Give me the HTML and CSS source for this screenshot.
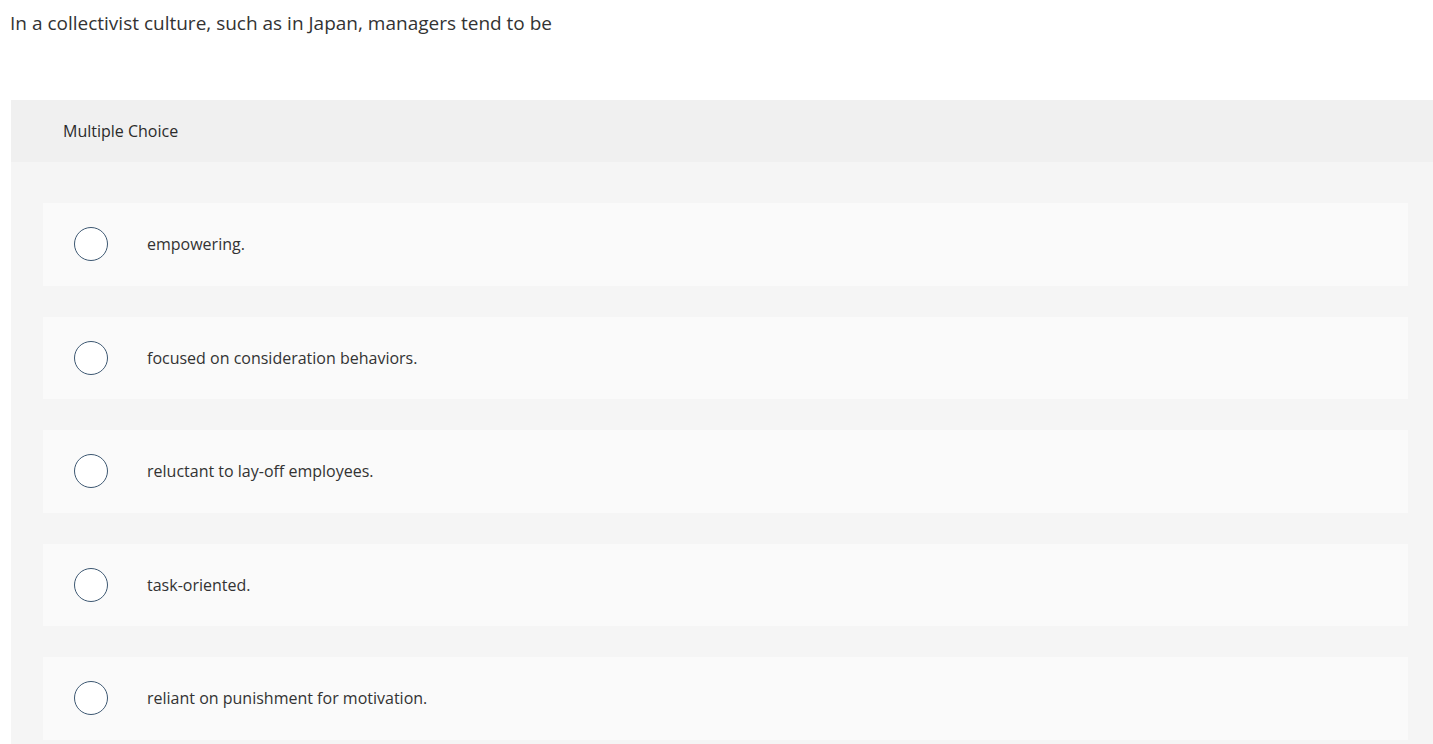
FILE: index.html
```html
<!DOCTYPE html>
<html>
<head>
<meta charset="utf-8">
<link rel="stylesheet" href="styles.css">
</head>
<body>
<p class="question">In a collectivist culture, such as in Japan, managers tend to be</p>
<section class="panel">
  <div class="panel-head">Multiple Choice</div>
  <div class="panel-body">
    <label class="option"><span class="radio"></span><span class="opt-text">empowering.</span></label>
    <label class="option"><span class="radio"></span><span class="opt-text">focused on consideration behaviors.</span></label>
    <label class="option"><span class="radio"></span><span class="opt-text">reluctant to lay-off employees.</span></label>
    <label class="option"><span class="radio"></span><span class="opt-text">task-oriented.</span></label>
    <label class="option"><span class="radio"></span><span class="opt-text">reliant on punishment for motivation.</span></label>
  </div>
</section>
</body>
</html>
```
FILE: styles.css
```css
html, body {
  margin: 0;
  padding: 0;
  background: #ffffff;
  font-family: "Open Sans", "Liberation Sans", sans-serif;
  color: #333333;
}
.question {
  margin: 0;
  padding: 10px 0 0 10px;
  font-size: 19px;
  line-height: 26px;
  height: 100px;
  box-sizing: border-box;
}
.panel {
  margin-left: 11px;
  background: #f5f5f5;
}
.panel-head {
  background: #f0f0f0;
  height: 62px;
  box-sizing: border-box;
  padding-left: 52px;
  font-size: 16px;
  line-height: 62px;
  color: #2b2b2b;
}
.panel-body {
  padding: 41px 25px 6px 32px;
  display: flex;
  flex-direction: column;
  gap: 31px;
}
.option {
  display: flex;
  align-items: center;
  height: 82.5px;
  background: #fafafa;
  padding-left: 31px;
  cursor: pointer;
}
.radio {
  width: 32px;
  height: 32px;
  border: 1.5px solid #3d5872;
  border-radius: 50%;
  background: #ffffff;
  flex: none;
}
.opt-text {
  margin-left: 39px;
  font-size: 16px;
  color: #333333;
}
```
